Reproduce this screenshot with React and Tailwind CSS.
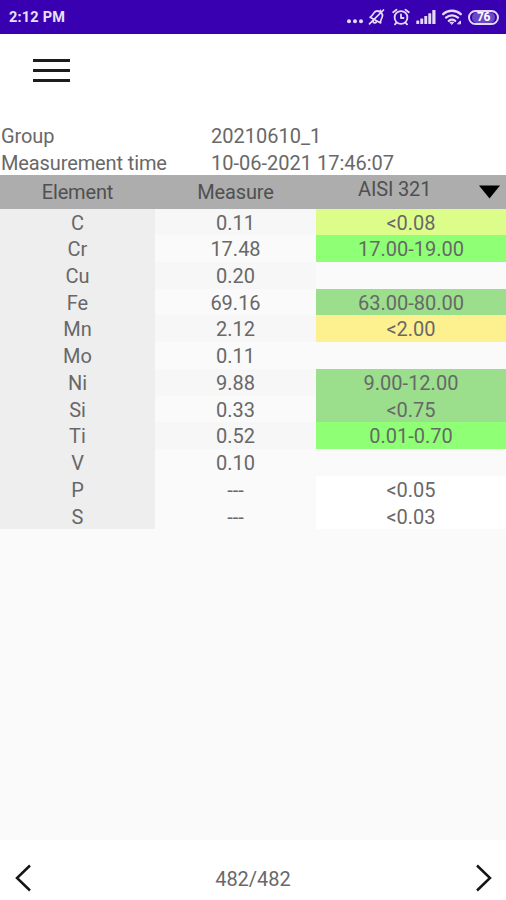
const rows = [
  { element: 'C', measure: '0.11', grade: '<0.08', measureBg: 'bg-[#f7f7f7]', gradeBg: 'bg-[#ddfd8b]' },
  { element: 'Cr', measure: '17.48', grade: '17.00-19.00', measureBg: 'bg-[#fafafa]', gradeBg: 'bg-[#8fff76]' },
  { element: 'Cu', measure: '0.20', grade: '', measureBg: 'bg-[#f7f7f7]', gradeBg: 'bg-[#fafafa]' },
  { element: 'Fe', measure: '69.16', grade: '63.00-80.00', measureBg: 'bg-[#fafafa]', gradeBg: 'bg-[#9bde8c]' },
  { element: 'Mn', measure: '2.12', grade: '<2.00', measureBg: 'bg-[#f7f7f7]', gradeBg: 'bg-[#fdf18f]' },
  { element: 'Mo', measure: '0.11', grade: '', measureBg: 'bg-[#fafafa]', gradeBg: 'bg-[#fafafa]' },
  { element: 'Ni', measure: '9.88', grade: '9.00-12.00', measureBg: 'bg-[#f7f7f7]', gradeBg: 'bg-[#9bde8c]' },
  { element: 'Si', measure: '0.33', grade: '<0.75', measureBg: 'bg-[#fafafa]', gradeBg: 'bg-[#9bde8c]' },
  { element: 'Ti', measure: '0.52', grade: '0.01-0.70', measureBg: 'bg-[#f7f7f7]', gradeBg: 'bg-[#8fff76]' },
  { element: 'V', measure: '0.10', grade: '', measureBg: 'bg-[#fafafa]', gradeBg: 'bg-[#fafafa]' },
  { element: 'P', measure: '---', grade: '<0.05', measureBg: 'bg-[#fafafa]', gradeBg: 'bg-white' },
  { element: 'S', measure: '---', grade: '<0.03', measureBg: 'bg-[#fafafa]', gradeBg: 'bg-white' },
];

function StatusIcons() {
  return (
    <div className="flex items-center text-[#e4daf8]">
      <svg width="18" height="18" viewBox="0 0 18 18" fill="currentColor">
        <circle cx="3" cy="13.2" r="2" />
        <circle cx="9" cy="13.2" r="2" />
        <circle cx="15" cy="13.2" r="2" />
      </svg>
      <svg className="ml-1" width="18" height="18" viewBox="0 0 18 18" fill="none" stroke="currentColor" strokeWidth="1.7" strokeLinecap="round" strokeLinejoin="round">
        <g transform="rotate(28 9 9)">
          <path d="M3 12.500h12c-1.200-1.500-1.300-3-1.300-5C13.700 4.800 11.800 3 9 3S4.300 4.800 4.300 7.500c0 2-.1 3.500-1.300 5z" />
          <path d="M9 3V1.500M7.200 13.500c.2 2.600 3.400 2.600 3.600 0" />
        </g>
        <path d="M1.500 15.800 15.500 2" />
      </svg>
      <svg className="ml-[6px]" width="18" height="18" viewBox="0 0 18 18" fill="none" stroke="currentColor" strokeWidth="1.8" strokeLinecap="round" strokeLinejoin="round">
        <circle cx="9" cy="9.500" r="6.400" />
        <path d="M9 6.500V10h2.500M1.200 4.200 4.500 1.700M16.800 4.200l-3.300-2.500M4.500 14.700 3 16.400M13.500 14.700l1.500 1.700" />
      </svg>
      <svg className="ml-[6px]" width="20" height="18" viewBox="0 0 20 18" fill="currentColor">
        <rect x="0.300" y="12.500" width="2.900" height="3.500" rx=".6" />
        <rect x="4.300" y="10.500" width="2.900" height="5.500" rx=".6" />
        <rect x="8.300" y="8" width="2.900" height="8" rx=".6" />
        <rect x="12.300" y="5.200" width="2.900" height="10.800" rx=".6" />
        <rect x="16.300" y="2" width="3.200" height="14" rx=".6" />
      </svg>
      <svg className="ml-[6px]" width="20" height="18" viewBox="0 0 20 18" fill="none" stroke="currentColor" strokeWidth="2.300" strokeLinecap="round">
        <path d="M1.200 6.200c5-4.600 12.600-4.600 17.600 0M4 9.600c3.500-3 8.500-3 12 0M6.800 12.800c2-1.500 4.400-1.500 6.400 0" />
        <path d="M8.300 14.300h3.400L10 16.200z" fill="currentColor" strokeWidth="1" />
        <path d="M15.800 15.500 18.500 13v2.500z" fill="currentColor" strokeWidth="1" />
      </svg>
      <div className="ml-[6px] flex h-[15px] w-[31px] items-center justify-center rounded-full border-2 border-current">
        <span className="flex h-[11px] w-[23px] items-center justify-center rounded-full bg-[#6a48c6] text-[12px] leading-none font-bold tracking-tight text-white">76</span>
      </div>
    </div>
  );
}

function StatusBar() {
  return (
    <header className="flex h-[34px] items-center justify-between bg-[#3900b1] pr-[7px] pl-[9px]">
      <span className="pt-[2px] text-[14.500px] leading-none font-bold tracking-[0.2px] text-[#e9e0fa]">2:12 PM</span>
      <StatusIcons />
    </header>
  );
}

function InfoRow({ label, value }) {
  return (
    <div className="grid h-[26.700px] grid-cols-[211px_1fr] items-center whitespace-nowrap">
      <span className="pl-px tracking-[-0.12px]">{label}</span>
      <span>{value}</span>
    </div>
  );
}

function ResultTable() {
  return (
    <section className="text-center">
      <div className="grid h-[33.600px] grid-cols-[155px_161px_190px] items-center bg-[#adadad] tracking-[-0.15px] text-[#505050]">
        <span className="pt-px">Element</span>
        <span className="pt-px">Measure</span>
        <button className="flex items-center justify-between pr-[5px] pl-[42px]">
          <span className="-mt-[5px]">AISI 321</span>
          <svg width="23" height="14" viewBox="0 0 23 14" fill="#000">
            <path d="M1 0.500h21L11.500 13.500z" />
          </svg>
        </button>
      </div>
      {rows.map((row) => (
        <div key={row.element} className="grid h-[26.720px] grid-cols-[155px_161px_190px] leading-[24.700px] *:pt-[2px]">
          <span className="bg-[#eeeeee]">{row.element}</span>
          <span className={row.measureBg}>{row.measure}</span>
          <span className={row.gradeBg}>{row.grade}</span>
        </div>
      ))}
    </section>
  );
}

function Pager() {
  return (
    <footer className="flex h-[60px] items-center justify-between bg-white px-[14px] pt-4">
      <button aria-label="Previous">
        <svg width="18" height="28" viewBox="0 0 18 28" fill="none" stroke="#151515" strokeWidth="2.500">
          <path d="M16 1.500 3 14l13 12.500" />
        </svg>
      </button>
      <span className="pt-px">482/482</span>
      <button aria-label="Next">
        <svg width="18" height="28" viewBox="0 0 18 28" fill="none" stroke="#151515" strokeWidth="2.500">
          <path d="M3 1.500 16 14 3 26.500" />
        </svg>
      </button>
    </footer>
  );
}

export default function App() {
  return (
    <div className="flex h-[900px] w-[506px] flex-col overflow-hidden bg-[#fafafa] font-[Roboto,sans-serif] text-[20px] text-[#686868]">
      <StatusBar />
      <div className="h-[141px] bg-white">
        <div className="flex h-[87px] items-start pt-[25px] pl-[33px]">
          <button className="flex flex-col gap-[7.500px]" aria-label="Menu">
            <span className="h-[2.500px] w-[37px] bg-[#1c1c1c]" />
            <span className="h-[2.500px] w-[37px] bg-[#1c1c1c]" />
            <span className="h-[2.500px] w-[37px] bg-[#1c1c1c]" />
          </button>
        </div>
        <InfoRow label="Group" value="20210610_1" />
        <InfoRow label="Measurement time" value="10-06-2021 17:46:07" />
      </div>
      <main className="flex-1">
        <ResultTable />
      </main>
      <Pager />
    </div>
  );
}
